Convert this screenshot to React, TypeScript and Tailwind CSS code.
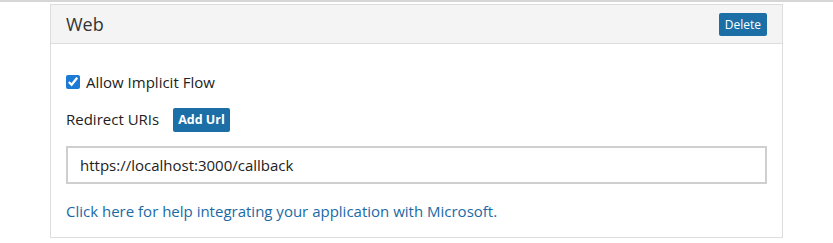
export default function App() {
  return (
    <div className="min-h-[243px] w-full border-t-2 border-[#d6d6d6] bg-white font-['Open_Sans',sans-serif] text-[#222]">
      <div className="ml-[50px] mt-[2px] w-[733px] border border-[#dddddd]">
        <div className="flex h-[39px] items-center justify-between border-b border-[#dddddd] bg-[#f4f4f4] pl-[15px] pr-[15px]">
          <span className="text-[18px] text-[#333]">Web</span>
          <button
            type="button"
            className="h-[23px] rounded-[2px] bg-[#1b6fa6] px-[6px] text-[12px] leading-[23px] text-white"
          >
            Delete
          </button>
        </div>
        <div className="px-[15px] pb-[15px] pt-[27px]">
          <label className="flex items-center gap-[6px] text-[15px]">
            <input type="checkbox" defaultChecked className="h-[14px] w-[14px] accent-[#1a7ad4]" />
            <span>Allow Implicit Flow</span>
          </label>
          <div className="mt-[14px] flex items-center gap-[14px]">
            <span className="text-[15px]">Redirect URIs</span>
            <button
              type="button"
              className="h-[24px] rounded-[2px] bg-[#1b6fa6] px-[5px] text-[12.5px] font-bold leading-[24px] text-white"
            >
              Add Url
            </button>
          </div>
          <input
            readOnly
            value="https://localhost:3000/callback"
            className="mt-[14px] h-[38px] w-full border-2 border-[#cfcfcf] px-[12px] text-[15px] text-[#222] outline-none"
          />
          <a href="#" className="mt-[16px] block text-[15px] text-[#1a6aa6]">
            Click here for help integrating your application with Microsoft.
          </a>
        </div>
      </div>
    </div>
  );
}
